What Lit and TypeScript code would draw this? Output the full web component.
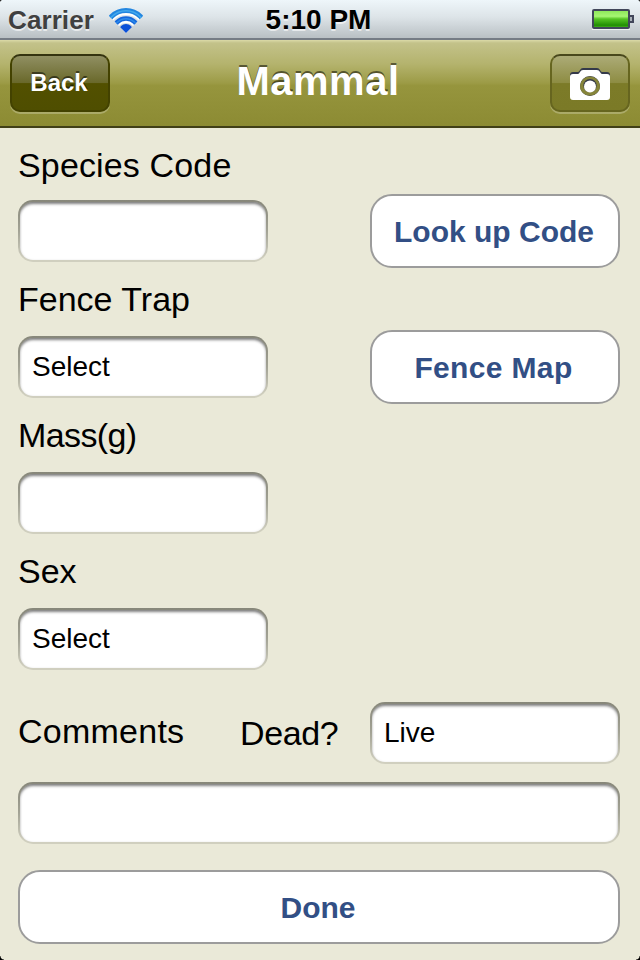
import { LitElement, html, css } from "lit";
import { customElement, property } from "lit/decorators.js";

@customElement("text-field")
class TextField extends LitElement {
  @property() value = "";
  static styles = css`
    :host {
      display: block;
      box-sizing: border-box;
      height: 62px;
      padding: 2px;
      border-radius: 15px;
      background: linear-gradient(#87877a, #a3a395 50%, #d0cfbf 95%);
    }
    .inner {
      box-sizing: border-box;
      height: 58px;
      border-radius: 13px;
      background: #fff;
      padding-left: 12px;
      font: 28px/58px "Liberation Sans", Arial, sans-serif;
      color: #000;
      box-shadow: inset 0 3px 3px -1px rgba(0, 0, 0, 0.42), inset 0 1px 3px rgba(0, 0, 0, 0.2);
    }
  `;
  render() {
    return html`<div class="inner">${this.value}</div>`;
  }
}

@customElement("round-button")
class RoundButton extends LitElement {
  static styles = css`
    :host {
      display: block;
      box-sizing: border-box;
      height: 74px;
      border: 2px solid #9c9c9c;
      border-radius: 22px;
      background: #fff;
      color: #324f85;
      padding-right: 2px;
      text-align: center;
      font: bold 30px/72px "Liberation Sans", Arial, sans-serif;
    }
  `;
  render() {
    return html`<slot></slot>`;
  }
}

@customElement("app-root")
class AppRoot extends LitElement {
  static styles = css`
    :host {
      display: block;
      position: relative;
      width: 640px;
      height: 960px;
      overflow: hidden;
      background: #eae9d8;
      font-family: "Liberation Sans", Arial, sans-serif;
      color: #000;
    }
    .status {
      box-sizing: border-box;
      height: 40px;
      display: grid;
      grid-template-columns: 1fr auto 1fr;
      align-items: start;
      padding: 0 6px 0 8px;
      background: linear-gradient(#eef6fa, #dde4e8 45%, #b9c0c4);
      border-bottom: 2px solid #757c85;
      font-weight: bold;
      font-size: 28px;
      line-height: 39px;
      text-shadow: 0 2px 0 rgba(255, 255, 255, 0.6);
    }
    .carrier {
      display: flex;
      gap: 15px;
      font-size: 26px;
      line-height: 40px;
      letter-spacing: 0.1px;
      color: #404040;
    }
    .time {
      padding-right: 5px;
    }
    .wifi {
      margin-top: 6px;
    }
    .battery {
      justify-self: end;
      margin-top: 8px;
    }
    .nav {
      box-sizing: border-box;
      height: 88px;
      display: grid;
      grid-template-columns: 100px 1fr 80px;
      padding: 14px 10px 0;
      background: linear-gradient(#dbdaa8 0, #c3c28a 3px, #b4b36d 28%, #9c9b46 50%, #96953d 53%, #8c8b33 100%);
      border-bottom: 2px solid #403f17;
    }
    .nav-btn {
      box-sizing: border-box;
      height: 58px;
      border-radius: 10px;
      border: 2px solid #39380f;
      border-color: #34330f #434200 #434200;
      background: linear-gradient(#908f62, #69682a 50%, #525000 51%, #4f4e00);
      box-shadow: 0 2px 0 rgba(255, 255, 255, 0.25);
      color: #fff;
      text-align: center;
      font-weight: bold;
      font-size: 24px;
      line-height: 54px;
      padding-right: 2px;
      text-shadow: 0 -2px 0 rgba(0, 0, 0, 0.5);
    }
    .camera {
      padding: 0;
      border-color: #49481c #66651f #66651f;
      background: linear-gradient(#acab77, #8d8c42 50%, #7c7b28 51%, #7b7a27);
    }
    .camera svg {
      display: block;
      margin: 11px 0 0 17px;
    }
    .title {
      text-align: center;
      padding-right: 24px;
      color: #fff;
      font-weight: bold;
      font-size: 40px;
      line-height: 54px;
      letter-spacing: 0.5px;
      text-shadow: 0 -2px 0 rgba(0, 0, 0, 0.5);
    }
    .form {
      padding: 14px 20px 0 18px;
    }
    .row {
      display: grid;
      grid-template-columns: 250px 250px;
      grid-template-rows: 58px 62px;
      justify-content: space-between;
      height: 136px;
    }
    .label {
      grid-column: 1 / -1;
      font-size: 34px;
      line-height: 42px;
    }
    .row:first-child .label {
      line-height: 46px;
      letter-spacing: 0.15px;
    }
    .row:nth-child(3) .label {
      letter-spacing: -0.6px;
    }
    .row round-button {
      align-self: center;
    }
    .row:nth-child(2) round-button {
      letter-spacing: 0.35px;
      padding-right: 3px;
    }
    .dead-row {
      display: grid;
      grid-template-columns: 222px 130px 250px;
      margin: 16px 0 18px;
      font-size: 34px;
      line-height: 58px;
      letter-spacing: 0.25px;
    }
    .dead {
      line-height: 62px;
      letter-spacing: -0.4px;
    }
    .dead-row text-field {
      letter-spacing: 0;
    }
    .done {
      margin-top: 26px;
    }
    .corner {
      position: absolute;
      width: 4px;
      height: 4px;
    }
    .tl { left: 0; top: 0; background: radial-gradient(circle at 100% 100%, transparent 4px, #222 5px); }
    .tr { right: 0; top: 0; background: radial-gradient(circle at 0 100%, transparent 4px, #222 5px); }
    .bl { left: 0; bottom: 0; background: radial-gradient(circle at 100% 0, transparent 3px, #000 4px); }
    .br { right: 0; bottom: 0; background: radial-gradient(circle at 0 0, transparent 3px, #000 4px); }
  `;

  private row(label: string, value: string, action = "") {
    return html`<div class="row">
      <div class="label">${label}</div>
      <text-field .value=${value}></text-field>
      ${action ? html`<round-button>${action}</round-button>` : null}
    </div>`;
  }

  render() {
    return html`
      <div class="status">
        <div class="carrier">
          <span>Carrier</span>
          <svg class="wifi" width="34" height="28" viewBox="0 0 34 28">
            <defs>
              <clipPath id="fan"><path d="M17 27 L-1 9 L-1 0 H35 V9Z" /></clipPath>
            </defs>
            <g clip-path="url(#fan)" fill="none">
              <g stroke="#fff" stroke-width="5" transform="translate(0 2)">
                <circle cx="17" cy="25" r="20.5" /><circle cx="17" cy="25" r="12.5" />
                <circle cx="17" cy="23" r="5" fill="#fff" stroke="none" />
              </g>
              <circle cx="17" cy="25" r="20.5" stroke="#2286e0" stroke-width="5" />
              <circle cx="17" cy="25" r="20.2" stroke="#43a9ec" stroke-width="1.4" />
              <circle cx="17" cy="25" r="12.5" stroke="#1668dc" stroke-width="4.6" />
              <circle cx="17" cy="25" r="12.3" stroke="#2d8be8" stroke-width="1.4" />
              <circle cx="17" cy="25" r="7" fill="#0b50d8" />
            </g>
          </svg>
        </div>
        <div class="time">5:10 PM</div>
        <svg class="battery" width="42" height="24" viewBox="0 0 42 24">
          <defs>
            <linearGradient id="b" x1="0" y1="0" x2="0" y2="1">
              <stop offset="0" stop-color="#8ae556" />
              <stop offset=".35" stop-color="#a6f573" />
              <stop offset=".5" stop-color="#55c323" />
              <stop offset=".85" stop-color="#218e04" />
              <stop offset="1" stop-color="#4fbd21" />
            </linearGradient>
          </defs>
          <rect x="0" y="20" width="38" height="2" fill="#fff" opacity=".7" />
          <rect x="1" y="2" width="36" height="18" rx="1" fill="url(#b)" stroke="#41465a" stroke-width="2" />
          <path d="M38 8h3v6h-3" fill="#a9b0b8" stroke="#41465a" stroke-width="2" />
        </svg>
      </div>
      <div class="nav">
        <div class="nav-btn">Back</div>
        <div class="title">Mammal</div>
        <div class="nav-btn camera">
          <svg width="42" height="36" viewBox="0 0 42 36">
            <path fill="#34394a" d="M4 5h5q1 0 2-2 1-2 3-2h14q2 0 3 2 1 2 2 2h5q3 0 3 3v21H1V8q0-3 3-3z" />
            <path fill="#fff" d="M4 7h5q1 0 2-2 1-2 3-2h14q2 0 3 2 1 2 2 2h5q3 0 3 3v20q0 3-3 3H4q-3 0-3-3V10q0-3 3-3z" />
            <circle cx="21" cy="19" r="10" fill="#34394a" />
            <path fill="#85843a" d="M11.2 17.5a10 10 0 0 1 19.6 0a10 9 0 0 1-19.6 4z" />
            <circle cx="21" cy="19" r="8" fill="none" stroke="#85843a" stroke-width="2.6" />
            <circle cx="21" cy="18.5" r="6.6" fill="#34394a" />
            <circle cx="21" cy="19.5" r="6" fill="#fff" />
          </svg>
        </div>
      </div>
      <div class="form">
        ${this.row("Species Code", "", "Look up Code")}
        ${this.row("Fence Trap", "Select", "Fence Map")}
        ${this.row("Mass(g)", "")}
        ${this.row("Sex", "Select")}
        <div class="dead-row">
          <div>Comments</div>
          <div class="dead">Dead?</div>
          <text-field .value=${"Live"}></text-field>
        </div>
        <text-field></text-field>
        <round-button class="done">Done</round-button>
      </div>
      <div class="corner tl"></div>
      <div class="corner tr"></div>
      <div class="corner bl"></div>
      <div class="corner br"></div>
    `;
  }
}
